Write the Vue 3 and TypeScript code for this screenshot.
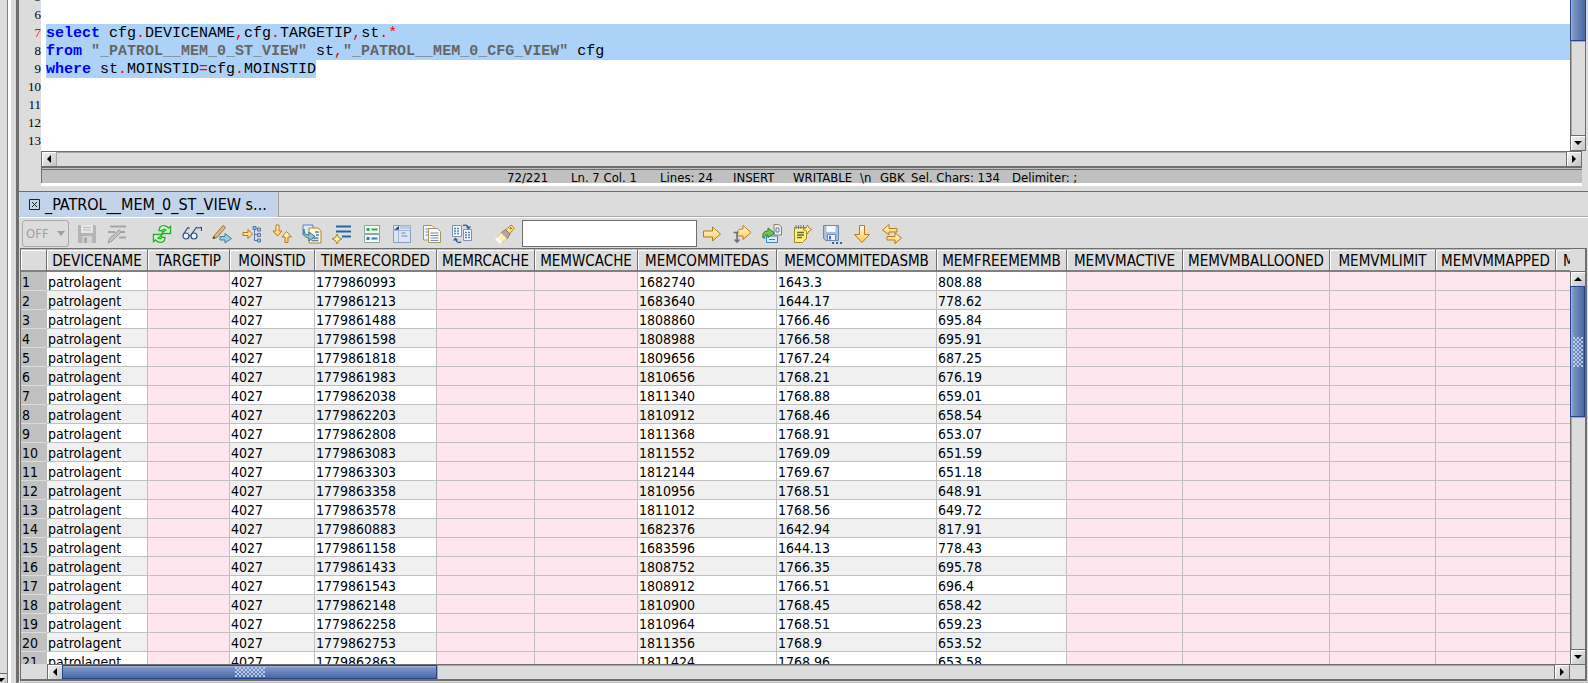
<script setup lang="ts">
interface Tool { name: string; art: string }
interface Token { text: string; kind?: 'kw' | 'op' | 'str' }
interface Line { no: number; selected?: 'full' | 'text'; tokens: Token[] }

const lines: Line[] = [
  { no: 5, tokens: [] },
  { no: 6, tokens: [] },
  {
    no: 7,
    selected: 'full',
    tokens: [
      { text: 'select', kind: 'kw' }, { text: ' cfg' }, { text: '.', kind: 'op' }, { text: 'DEVICENAME' },
      { text: ',', kind: 'op' }, { text: 'cfg' }, { text: '.', kind: 'op' }, { text: 'TARGETIP' },
      { text: ',', kind: 'op' }, { text: 'st' }, { text: '.*', kind: 'op' },
    ],
  },
  {
    no: 8,
    selected: 'full',
    tokens: [
      { text: 'from', kind: 'kw' }, { text: ' ' }, { text: '"_PATROL__MEM_0_ST_VIEW"', kind: 'str' }, { text: ' st' },
      { text: ',', kind: 'op' }, { text: '"_PATROL__MEM_0_CFG_VIEW"', kind: 'str' }, { text: ' cfg' },
    ],
  },
  {
    no: 9,
    selected: 'text',
    tokens: [
      { text: 'where', kind: 'kw' }, { text: ' st' }, { text: '.', kind: 'op' }, { text: 'MOINSTID' },
      { text: '=', kind: 'op' }, { text: 'cfg' }, { text: '.', kind: 'op' }, { text: 'MOINSTID' },
    ],
  },
  { no: 10, tokens: [] },
  { no: 11, tokens: [] },
  { no: 12, tokens: [] },
  { no: 13, tokens: [] },
]

const status = ['72/221', 'Ln. 7 Col. 1', 'Lines: 24', 'INSERT', 'WRITABLE', '\\n', 'GBK', 'Sel. Chars: 134', 'Delimiter: ;']

const editTools: Tool[] = [
  { name: 'Save', art: '<path d="M1 1h17l1 1v17H1z" fill="#b4b4b4"/><path d="M4 1h12v8H4z" fill="#e6e6e6"/><path d="M5.500 12h9.500v7H5.500z" fill="#d4d4d4"/><path d="M7 13.500h3V19H7z" fill="#a8a8a8"/><path d="M6 3.500h8M6 6h8" stroke="#bcbcbc"/>' },
  { name: 'Filter edit', art: '<path d="M3 2.500h16M1 8h7M13 8h5M12 13.500h7" stroke="#a5a5a5" stroke-width="2.200"/><path d="M1 19l1.500-4.500L12 6l2.500 1.500L5 17z" fill="#c4c4c4" stroke="#999"/>' },
]

const viewTools: Tool[] = [
  { name: 'Refresh', art: '<path d="M10 9.500h8.500V2.500L16.500 4C14 1 10 1 8 3L7 6.500l3 .5c1-2 2-2.500 4-1L11 8z" fill="#e4fae0" stroke="#22b522" stroke-width="1.400"/><path d="M10 10.500H1.500v7l2-1.500c2.500 3 6.500 3 8.500 1l1-3.500-3-.5c-1 2-2 2.500-4 1L9 12z" fill="#e4fae0" stroke="#22b522" stroke-width="1.400"/>' },
  { name: 'View as text', art: '<g fill="#e8f0fa" stroke="#2d4f80" stroke-width="1.200"><circle cx="4" cy="12" r="3"/><circle cx="12" cy="12" r="3"/><path fill="none" d="M1.500 10L6 3.500l1.500 1M9.500 10l5-6.500L16 4l3.500-.5V7M7 11.500h2"/></g>' },
  { name: 'Edit and go', art: '<path d="M2 12L11 1.500l2.500 2L5 13.500l-4 1z" fill="#e3b77d" stroke="#a07040"/><path d="M.5 15l1-3 2 2z" fill="#444"/><path d="M8 12.500h5V9.500l6.500 5-6.500 4.500v-3H8z" fill="#9fcbd8" stroke="#3f7f96"/>' },
  { name: 'Expand tree', art: '<path d="M1 8.500h5v-3l4.500 4.500L6 14.500v-3H1z" fill="#ffe08a" stroke="#b57a14"/><path d="M12.500 3v14M12 4.500h3M12 10.500h3M12 16.500h3" stroke="#5478ae" fill="none"/><path d="M11 2.500h3v3h-3zM15.500 4h3v3h-3zM15.500 9.500h3v3h-3zM15.500 15h3v3h-3z" fill="#a9c0e6" stroke="#5478ae"/>' },
  { name: 'Sort', art: '<path d="M4 1h3v6h3l-4.500 5L1 7h3z" fill="url(#gold)" stroke="#b9791a"/><path d="M13 18.500h3V13h3.500L14.500 7.500 10 13h3z" fill="url(#gold)" stroke="#b9791a"/>' },
  { name: 'Import page', art: '<path d="M1 1h10v10H1z" fill="#dbe8f8" stroke="#5b83b8"/><path d="M7 4h9l3 3v12H7z" fill="#fff6d8" stroke="#a8873a"/><path d="M9.500 14h7M9.500 16.500h7M13 8h4M14 11h3" stroke="#5b83b8" stroke-width="1.500"/><path d="M2 5c0 5 2 6 5 6V8l6 4.500L7 17v-3C3 14 1 11 2 5z" fill="#8fc3cf" stroke="#39798c"/>' },
  { name: 'Add row', art: '<path d="M4 2.500h15M4 7.500h15M10 12.500h9" stroke="#2268a8" stroke-width="2.200"/><path d="M5 10l1.500 3.500L10 15l-3.500 1.500L5 20l-1.500-3.500L0 15l3.500-1.500z" fill="#fff2ae" stroke="#ad8420"/>' },
  { name: 'Record view', art: '<path d="M2.500 1.500h15v8h-15zM2.500 10.500h15v8h-15z" fill="#f4faf4" stroke="#87a8a0"/><path d="M4.500 4h3v3h-3z" fill="#3ea546"/><path d="M4.500 13h3v3h-3z" fill="#3c79b8"/><path d="M9.500 5.500h6" stroke="#3ea546" stroke-width="2"/><path d="M9.500 14.500h6" stroke="#3c79b8" stroke-width="2"/>' },
  { name: 'Form view', art: '<path d="M1.500 1.500h17v17h-17z" fill="#dce6f6" stroke="#8a9cc0"/><path d="M8 1.500h10.500v3.500H8z" fill="#b9c9e6"/><path d="M1 6.500h18M6.500 6v12" stroke="#a4b5d6" fill="none"/><path d="M2 6l5-.5V2z" fill="#1d3f75"/><path d="M9.500 9h4M9.500 12h6" stroke="#6a86b8"/>' },
  { name: 'Copy', art: '<path d="M1.500 1.500H10l3 3V16H1.500z" fill="#f4f6fb" stroke="#a99552"/><path d="M3.500 5h4M3.500 8h4M3.500 11h4" stroke="#6a8fc4"/><path d="M6.500 4.500h9l3 3v11h-12z" fill="#f7f9fe" stroke="#a99552"/><path d="M8.500 9h8M8.500 11.500h8M8.500 14h8M8.500 16.500h8" stroke="#6a8fc4"/>' },
  { name: 'Copy columns', art: '<path d="M.5 1.500h9v11h-9zM11.500 5.500h8v11h-8z" fill="#f1f5fc" stroke="#8091ad"/><path d="M2 4.500h6M2 7h6M2 9.500h6M13 8.500h5M13 11h5M13 13.500h5" stroke="#5e81b8" stroke-dasharray="2 1" stroke-width="1.400"/><path d="M11 1.500c3-1 5 0 5.500 2.500M14.500 2.500l2 2 2-2M9 18c-3 1-5 0-5.500-3M1.500 16.500l2-2 2 2" fill="none" stroke="#2f629c" stroke-width="1.400"/>' },
]

const findTool: Tool = { name: 'Find', art: '<path d="M10.500 6L16 1l3.500 3-5 6z" fill="#ffd98a" stroke="#c08224"/><path d="M6 9l4.500-3.500L15 10l-3 5z" fill="#b7a69a" stroke="#86766c"/><path d="M1.500 14L6 8.500l6 6L6 19z" fill="#ffeebb" stroke="#d0b070" stroke-width=".6"/><path d="M1 14l5 5" stroke="#fffdf0" stroke-width="2.500"/><path d="M15 3.500l1.500 1.500" stroke="#8a5b22" stroke-width="1.500"/>' }

const resultTools: Tool[] = [
  { name: 'Find next', art: '<path d="M1.500 7h9V3l8 7-8 7v-4h-9z" fill="url(#gold)" stroke="#b9791a" stroke-linejoin="round"/>' },
  { name: 'Find below', art: '<path d="M5.500 13C4.500 7 6 5 11 5V1.500l8 7-8 7V12c-3 0-4-1-5.500 1z" fill="url(#gold)" stroke="#b9791a"/><path d="M1.500 8.500h5M5 8.500v9M2.500 15.500L5 18l2.500-2.500" fill="none" stroke="#68727c" stroke-width="1.600"/>' },
  { name: 'Export', art: '<path d="M12 .5h5l2.500 2.500v8H12z" fill="#eef1f8" stroke="#8a805e"/><path d="M14 4h3v4h-3z" fill="none" stroke="#5578aa"/><path d="M4.500 12h11v6.500h-11z" fill="#d9ecfa" stroke="#3f82b8"/><path d="M7 15.500h6" stroke="#3f82b8"/><path d="M1 14C0 8 3 7 6 7V4l6.500 5L6 13.500V11c-3 0-4 1-3 3z" fill="#6fc55e" stroke="#2c7f29"/>' },
  { name: 'New note', art: '<path d="M2.500 3.500h12v11l-4 4h-8z" fill="#fff27a" stroke="#9b8a2a"/><path d="M4 1v4M6.500 1v4M9 1v4M11.500 1v4" stroke="#777"/><path d="M5 8.500h7M5 11h7M5 13.500h5" stroke="#6b6a3a" stroke-width="1.300"/><path d="M15.500 1l1.300 3L20 5.500 16.800 7l-1.300 3-1.300-3L11 5.500 14.200 4z" fill="#fff6c4" stroke="#b98a1c"/>' },
  { name: 'Save as', art: '<path d="M1.500 1.500h15v15h-13l-2-2z" fill="#a9c0dd" stroke="#6c87ac"/><path d="M4.500 2h9v6h-9z" fill="#f2f7fc"/><path d="M5.500 10.500h8v6h-8z" fill="#e9eff6" stroke="#6c87ac"/><path d="M7 12h2v3.500H7z" fill="#4f6f9c"/><path d="M10 18h2v2h-2zM14 18h2v2h-2zM18 18h2v2h-2z" fill="#3c5da0"/>' },
  { name: 'Move down', art: '<path d="M7.500 1.500h5v9h5L10 18.500 2.500 10.500h5z" fill="url(#gold)" stroke="#b9791a" stroke-linejoin="round"/>' },
  { name: 'Swap', art: '<path d="M7 .5L.5 6 7 11V8h8V4.500H7z" fill="url(#gold)" stroke="#b9791a"/><path d="M13 9l6.500 5-6.500 5.500V16H5v-3.500h8z" fill="url(#gold)" stroke="#b9791a"/>' },
]

const columns = [
  { name: 'DEVICENAME', width: 101 },
  { name: 'TARGETIP', width: 82 },
  { name: 'MOINSTID', width: 85 },
  { name: 'TIMERECORDED', width: 122 },
  { name: 'MEMRCACHE', width: 98 },
  { name: 'MEMWCACHE', width: 103 },
  { name: 'MEMCOMMITEDAS', width: 139 },
  { name: 'MEMCOMMITEDASMB', width: 160 },
  { name: 'MEMFREEMEMMB', width: 130 },
  { name: 'MEMVMACTIVE', width: 116 },
  { name: 'MEMVMBALLOONED', width: 147 },
  { name: 'MEMVMLIMIT', width: 106 },
  { name: 'MEMVMMAPPED', width: 120 },
  { name: 'M', width: 27 },
]

const samples: [string, string, string, string][] = [
  ['1779860993', '1682740', '1643.3', '808.88'],
  ['1779861213', '1683640', '1644.17', '778.62'],
  ['1779861488', '1808860', '1766.46', '695.84'],
  ['1779861598', '1808988', '1766.58', '695.91'],
  ['1779861818', '1809656', '1767.24', '687.25'],
  ['1779861983', '1810656', '1768.21', '676.19'],
  ['1779862038', '1811340', '1768.88', '659.01'],
  ['1779862203', '1810912', '1768.46', '658.54'],
  ['1779862808', '1811368', '1768.91', '653.07'],
  ['1779863083', '1811552', '1769.09', '651.59'],
  ['1779863303', '1812144', '1769.67', '651.18'],
  ['1779863358', '1810956', '1768.51', '648.91'],
  ['1779863578', '1811012', '1768.56', '649.72'],
  ['1779860883', '1682376', '1642.94', '817.91'],
  ['1779861158', '1683596', '1644.13', '778.43'],
  ['1779861433', '1808752', '1766.35', '695.78'],
  ['1779861543', '1808912', '1766.51', '696.4'],
  ['1779862148', '1810900', '1768.45', '658.42'],
  ['1779862258', '1810964', '1768.51', '659.23'],
  ['1779862753', '1811356', '1768.9', '653.52'],
  ['1779862863', '1811424', '1768.96', '653.58'],
]
const rows = samples.map(([time, as, mb, free]) => ['patrolagent', '', '4027', time, '', '', as, mb, free, '', '', '', '', ''])
</script>

<template>
  <div class="window">
    <svg class="defs" aria-hidden="true">
      <linearGradient id="gold" x1="0" y1="0" x2="0" y2="1">
        <stop offset="0" stop-color="#fffbe0" />
        <stop offset="1" stop-color="#ffc94f" />
      </linearGradient>
    </svg>

    <aside class="side">
      <button class="sb-btn side-btn" aria-label="Scroll side panel down"><i class="tri down"></i></button>
    </aside>

    <main class="main">
      <section class="editor">
        <div class="gutter">
          <span v-for="l in lines" :key="l.no" :class="{ current: l.no === 7 }">{{ l.no }}</span>
        </div>
        <div class="code">
          <div v-for="l in lines" :key="l.no" class="line" :class="{ sel: l.selected === 'full' }"><span :class="{ sel: l.selected === 'text' }"><span v-for="(t, i) in l.tokens" :key="i" :class="t.kind">{{ t.text }}</span></span></div>
        </div>
        <div class="vbar">
          <div class="thumb v editor-thumb"></div>
          <div class="track"></div>
          <button class="sb-btn" aria-label="Scroll editor down"><i class="tri down"></i></button>
        </div>
      </section>

      <div class="editor-foot">
        <div class="hbar">
          <button class="sb-btn" aria-label="Scroll editor left"><i class="tri left"></i></button>
          <div class="track"></div>
          <button class="sb-btn" aria-label="Scroll editor right"><i class="tri right"></i></button>
        </div>
        <div class="status">
          <span v-for="s in status" :key="s">{{ s }}</span>
        </div>
      </div>

      <div class="tabs">
        <div class="tab">
          <button class="close" aria-label="Close tab">
            <svg width="11" height="11" viewBox="0 0 11 11"><path d="M.5.500h10v10H.5zM3 3l5 5M8 3l-5 5" fill="none" stroke="#222" /></svg>
          </button>
          <span>_PATROL__MEM_0_ST_VIEW s...</span>
        </div>
      </div>

      <div class="toolbar">
        <button class="off" disabled>OFF<i class="caret"></i></button>
        <div class="tools">
          <button v-for="t in editTools" :key="t.name" :aria-label="t.name"><svg viewBox="0 0 20 20" fill="none" v-html="t.art"></svg></button>
        </div>
        <div class="tools view">
          <button v-for="t in viewTools" :key="t.name" :aria-label="t.name"><svg viewBox="0 0 20 20" fill="none" v-html="t.art"></svg></button>
        </div>
        <div class="tools find">
          <button :aria-label="findTool.name"><svg viewBox="0 0 20 20" fill="none" v-html="findTool.art"></svg></button>
          <input type="text" aria-label="Find in results" />
          <button v-for="t in resultTools" :key="t.name" :aria-label="t.name"><svg viewBox="0 0 20 20" fill="none" v-html="t.art"></svg></button>
        </div>
      </div>

      <section class="results">
        <div class="grid">
          <table>
            <colgroup>
              <col class="rowcol" />
              <col v-for="(c, i) in columns" :key="i" :style="{ width: c.width + 'px' }" />
            </colgroup>
            <thead>
              <tr>
                <th></th>
                <th v-for="(c, i) in columns" :key="i">{{ c.name }}</th>
              </tr>
            </thead>
            <tbody>
              <tr v-for="(r, n) in rows" :key="n">
                <th scope="row">{{ n + 1 }}</th>
                <td v-for="(v, i) in r" :key="i" :class="{ nil: v === '' }">{{ v }}</td>
              </tr>
            </tbody>
          </table>
        </div>
        <div class="vbar grid-v">
          <button class="sb-btn" aria-label="Scroll results up"><i class="tri up"></i></button>
          <div class="thumb v"><i class="grip"></i></div>
          <div class="track"></div>
          <button class="sb-btn" aria-label="Scroll results down"><i class="tri down"></i></button>
        </div>
        <div class="hbar grid-h">
          <button class="sb-btn" aria-label="Scroll results left"><i class="tri left"></i></button>
          <div class="thumb h"><i class="grip wide"></i></div>
          <div class="track"></div>
          <button class="sb-btn" aria-label="Scroll results right"><i class="tri right"></i></button>
        </div>
      </section>
    </main>
  </div>
</template>

<style>
body { background: #dcdcdc; overflow: hidden; }
</style>

<style scoped>
* { box-sizing: border-box; }
button { margin: 0; padding: 0; border: 0; background: none; font: inherit; color: inherit; }
.window {
  display: flex;
  height: 100vh;
  background: #dcdcdc;
  color: #000;
  font: 14px/18px "DejaVu Sans Condensed", Tahoma, "Noto Sans", sans-serif;
}
.defs { position: absolute; width: 0; height: 0; }
.side {
  display: flex;
  flex-direction: column;
  justify-content: flex-end;
  flex: none;
  width: 11px;
  border-right: 3px solid #fff;
  box-shadow: inset -1px 0 #808080;
}
.sb-btn.side-btn { align-items: flex-end; justify-content: flex-end; width: 7px; height: 10px; padding: 0 2px 1px 0; border-top: 1px solid #6e6e6e; box-shadow: none; }
.main {
  display: flex;
  flex-direction: column;
  flex: 1;
  min-width: 0;
  margin-left: 5px;
  padding-bottom: 1px;
  border-left: 3px solid #6e6e6e;
  border-bottom: 1px solid #c0c0c0;
}

.editor { display: flex; flex: none; height: 151px; padding-right: 2px; }
.gutter, .code {
  display: flex;
  flex-direction: column;
  justify-content: flex-end;
  overflow: hidden;
  padding-bottom: 1px;
}
.gutter { flex: none; width: 22px; font: 13px/18px "Liberation Serif", serif; }
.gutter span { flex: none; height: 18px; text-align: right; }
.gutter .current { color: #f00; }
.code {
  flex: 1;
  min-width: 0;
  background: #fff;
  font: 15px/20px "Liberation Mono", monospace;
  white-space: pre;
}
.line { flex: none; height: 18px; margin-left: 5px; }
.line > span { display: inline-block; height: 18px; }
.sel { background: #acd2f8; }
.kw { color: #00f; font-weight: bold; }
.op { color: #f00; }
.str { color: #666; font-weight: bold; }

.vbar { display: flex; flex-direction: column; flex: none; width: 16px; border: 1px solid #6e6e6e; border-top: 0; background: #dcdcdc; }
.hbar { display: flex; flex: none; height: 16px; border: 1px solid #6e6e6e; background: #dcdcdc; }
.track { flex: 1; min-width: 0; box-shadow: inset 1px 1px #a8a8a8; }
.sb-btn {
  display: flex;
  align-items: center;
  justify-content: center;
  flex: none;
  width: 14px;
  height: 14px;
  background: linear-gradient(135deg, #f4f4f4, #c4c4c4);
  box-shadow: 0 0 0 1px #6e6e6e, inset 1px 1px #fff;
}
.tri { width: 0; height: 0; border: 4px solid transparent; }
.tri.down { border-top-color: #000; border-bottom: 0; }
.tri.up { border-bottom-color: #000; border-top: 0; }
.tri.left { border-right-color: #000; border-left: 0; }
.tri.right { border-left-color: #000; border-right: 0; }
.thumb { display: flex; align-items: center; justify-content: center; flex: none; border: 1px solid #24458c; }
.thumb.v { background: linear-gradient(90deg, #a4b8dc 0, #7d94c4 2px, #4a67a4 100%); margin: 0 -1px; }
.thumb.h { background: linear-gradient(180deg, #a4b8dc 0, #7d94c4 2px, #4a67a4 100%); }
.editor-thumb { height: 41px; border-top: 0; }
.grip {
  width: 10px;
  height: 30px;
  background:
    radial-gradient(circle at 1px 1px, #b8cbea 1px, transparent 1px) 0 0 / 4px 4px,
    radial-gradient(circle at 3px 3px, #b8cbea 1px, transparent 1px) 0 0 / 4px 4px;
}
.grip.wide { width: 30px; height: 10px; }

.editor-foot { flex: none; margin: 0 6px 0 22px; border-bottom: 3px solid #fff; }
.status {
  display: grid;
  grid-template-columns: 64px 89px 73px 60px 67px 20px 31px 101px 105px;
  justify-content: center;
  height: 16px;
  border: solid #6e6e6e;
  border-width: 3px 0 0 1px;
  border-top-style: double;
  background: #c0c0c0;
  font-size: 13px;
  line-height: 15px;
  white-space: pre;
}

.tabs { display: flex; flex: none; height: 27px; margin-top: 5px; border-top: 1px solid #6e6e6e; border-bottom: 1px solid #fff; box-shadow: inset 0 -1px #aaa; }
.tab {
  display: flex;
  align-items: center;
  gap: 5px;
  margin-left: 1px;
  padding: 0 11px 0 9px;
  border-right: 1px solid #a0a0a0;
  background: #c3d4ea;
  font-size: 16px;
  white-space: nowrap;
}
.close { display: flex; }

.toolbar { display: flex; align-items: center; flex: none; height: 30px; padding: 1px 3px 0; }
.off {
  display: flex;
  align-items: center;
  justify-content: space-between;
  width: 47px;
  height: 27px;
  margin-right: 3px;
  padding: 0 3px;
  border: 1px solid #aaa;
  border-radius: 3px;
  color: #a0a0a0;
  font-size: 13px;
}
.caret { border: 4px solid transparent; border-top: 5px solid #a0a0a0; border-bottom: 0; }
.tools { display: flex; align-items: center; }
.tools button { display: flex; align-items: center; justify-content: center; flex: none; width: 30px; height: 26px; }
.tools svg { width: 20px; height: 20px; }
.view { margin-left: 15px; }
.find { margin-left: 13px; }
.find input { width: 175px; height: 27px; margin-left: 2px; padding: 0 3px; border: 1px solid #6e6e6e; border-radius: 0; background: #fff; font: inherit; }

.results {
  display: grid;
  grid-template: minmax(0, 1fr) 15px / minmax(0, 1fr) 15px;
  flex: 1;
  min-height: 0;
  margin: 0 1px;
  border: solid #6e6e6e;
  border-width: 1px 2px 2px 1px;
}
.grid { overflow: hidden; }
table { width: 0; min-width: 100%; border-collapse: separate; border-spacing: 0; table-layout: fixed; }
.rowcol { width: 26px; }
th, td { overflow: hidden; padding: 0; font-weight: normal; white-space: nowrap; }
thead th {
  height: 23px;
  border-top: 1px solid #c0c0c0;
  border-right: 1px solid #6e6e6e;
  border-bottom: 2px solid #808080;
  background: #dcdcdc;
  box-shadow: inset 1px 1px #fff;
  padding-top: 2px;
  font-size: 15px;
  line-height: 18px;
}
thead th:last-child { padding-left: 7px; text-align: left; }
tbody th, td { height: 19px; padding-top: 2px; border-right: 1px solid #c0c0c0; line-height: 16px; }
tbody th { padding-left: 1px; border-bottom: 1px solid #dcdcdc; background: #c0c0c0; text-align: left; }
td { padding-left: 1px; border-bottom: 1px solid #c0c0c0; background: #fff; }
tbody tr:nth-child(even) td { background: #f0f0f0; }
tbody tr td.nil { background: #ffe6ee; }
.grid-v { width: 15px; margin-top: 23px; border-bottom: 0; border-right: 0; }
.grid-v .thumb { height: 131px; margin-right: 0; }
.grid-h { height: 15px; margin-left: 26px; border-bottom: 0; }
.grid-h .thumb { width: 375px; }
</style>
